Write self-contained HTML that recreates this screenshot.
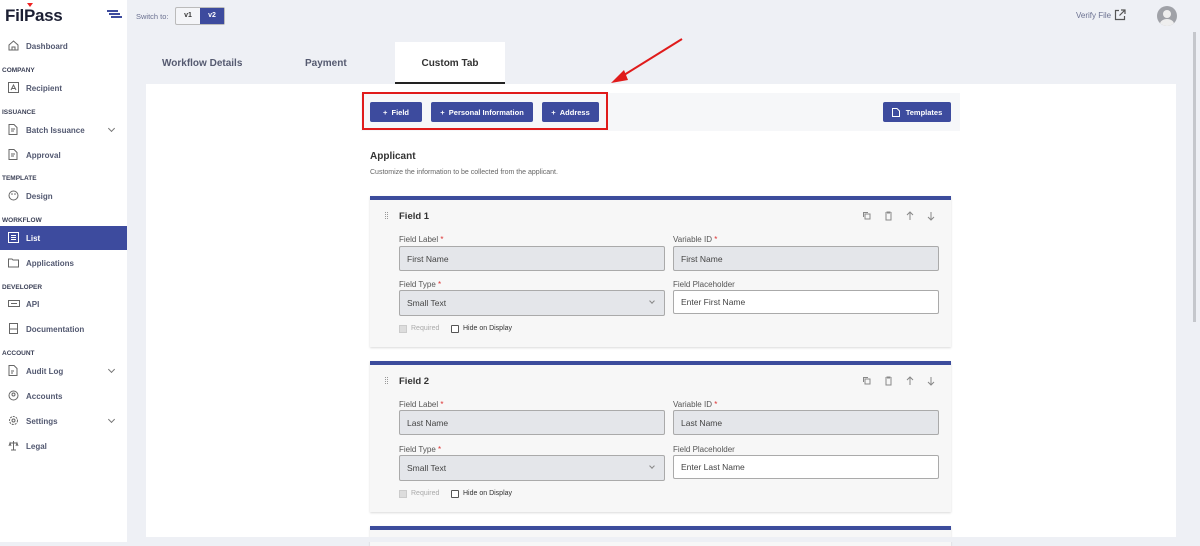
<!DOCTYPE html>
<html><head><meta charset="utf-8"><style>
*{box-sizing:border-box;margin:0;padding:0}
body{width:1200px;height:542px;overflow:hidden;background:#eef0f5;font-family:"Liberation Sans",sans-serif;position:relative;color:#333}
.abs{position:absolute;white-space:nowrap}
#side{left:0;top:0;width:127px;height:542px;background:#fff}
.logo{left:5px;top:6px;font-size:17px;font-weight:bold;color:#1c1f33;letter-spacing:-0.3px}
.sec{left:2px;font-size:6.5px;font-weight:bold;color:#3a3f55}
.item{left:0;width:127px;height:24px;font-size:8px;font-weight:bold;color:#525870;display:flex;align-items:center;padding-left:26px}
.item svg{position:absolute;left:8px;top:6px}
.item.act{background:#3d4b9e;color:#fff}
.chev{position:absolute;right:13px;top:8px;width:5px;height:5px;border-right:1px solid #777;border-bottom:1px solid #777;transform:rotate(45deg)}
.btn{background:#3d4b9e;color:#fff;font-size:7.5px;font-weight:bold;border-radius:2px;height:20px;top:102px;display:flex;align-items:center;justify-content:center}
.card{left:370px;width:581px;background:#f7f7f7;border-top:4px solid #3c4c9c;box-shadow:0 1px 2px rgba(0,0,0,.15)}
.lbl{font-size:8px;color:#555}
.lbl b{color:#d33;font-weight:normal}
.inp{width:266px;height:25px;border:1px solid #aaa;border-radius:2px;background:#e4e6ea;font-size:8.5px;color:#444;padding-left:7px;display:flex;align-items:center}
.inp.w{background:#fff}
.ft{font-size:9.5px;font-weight:bold;color:#333}
</style></head><body>
<div id="side" class="abs">
<div class="abs logo">Fil<span style="position:relative">P<span style="position:absolute;left:3px;top:-3px;border:3px solid transparent;border-top:4px solid #e22"></span></span>ass</div>
<div class="abs" style="left:107px;top:10px;width:11px;height:1.5px;background:#3d4b9e;box-shadow:2px 3px 0 #3d4b9e,4px 6px 0 #3d4b9e"></div>
<div class="abs item" style="top:34px"><svg width="11" height="11"><path d="M1 5L5.5 1 10 5V10H1Z M4 10V7H7V10" fill="none" stroke="#666"/></svg>Dashboard</div>
<div class="abs sec" style="top:67px">COMPANY</div>
<div class="abs item" style="top:76px"><svg width="11" height="11"><rect x=".5" y=".5" width="10" height="10" fill="none" stroke="#666"/><path d="M3 8L5.5 3 8 8M4 6.5H7" fill="none" stroke="#666"/></svg>Recipient</div>
<div class="abs sec" style="top:109px">ISSUANCE</div>
<div class="abs item" style="top:118px"><svg width="11" height="11"><path d="M1 .5H6L9 3.5V10.5H1Z M3 5H7M3 7H6" fill="none" stroke="#666"/></svg>Batch Issuance<span class="chev"></span></div>
<div class="abs item" style="top:143px"><svg width="11" height="11"><path d="M1 .5H6L9 3.5V10.5H1Z M3 5H7M3 7H6" fill="none" stroke="#666"/></svg>Approval</div>
<div class="abs sec" style="top:175px">TEMPLATE</div>
<div class="abs item" style="top:184px"><svg width="11" height="11"><circle cx="5.5" cy="5.5" r="4.5" fill="none" stroke="#666"/><circle cx="4" cy="4" r=".8" fill="#666"/><circle cx="7" cy="4" r=".8" fill="#666"/></svg>Design</div>
<div class="abs sec" style="top:217px">WORKFLOW</div>
<div class="abs item act" style="top:226px"><svg width="11" height="11"><rect x=".5" y=".5" width="10" height="10" fill="none" stroke="#fff"/><path d="M3 3.5H8M3 5.5H8M3 7.5H8" stroke="#fff"/></svg>List</div>
<div class="abs item" style="top:251px"><svg width="11" height="11"><path d="M.5 2H4L5 3H10.5V10H.5Z" fill="none" stroke="#666"/></svg>Applications</div>
<div class="abs sec" style="top:284px">DEVELOPER</div>
<div class="abs item" style="top:292px"><svg width="12" height="11"><rect x=".5" y="2.5" width="11" height="6" fill="none" stroke="#666"/><path d="M3 5.5H9" stroke="#666"/></svg>API</div>
<div class="abs item" style="top:317px"><svg width="11" height="11"><rect x="1.5" y=".5" width="8" height="10" fill="none" stroke="#666"/><path d="M1.5 6H9.5" stroke="#666"/></svg>Documentation</div>
<div class="abs sec" style="top:350px">ACCOUNT</div>
<div class="abs item" style="top:359px"><svg width="11" height="11"><path d="M1 .5H6L9 3.5V10.5H1Z M3 6H6M3 8H5" fill="none" stroke="#666"/></svg>Audit Log<span class="chev"></span></div>
<div class="abs item" style="top:384px"><svg width="11" height="11"><circle cx="5.5" cy="5.5" r="4.5" fill="none" stroke="#666"/><circle cx="5.5" cy="4.5" r="1.5" fill="none" stroke="#666"/></svg>Accounts</div>
<div class="abs item" style="top:409px"><svg width="11" height="11"><circle cx="5.5" cy="5.5" r="4" fill="none" stroke="#666" stroke-dasharray="2 1"/><circle cx="5.5" cy="5.5" r="1.5" fill="none" stroke="#666"/></svg>Settings<span class="chev"></span></div>
<div class="abs item" style="top:434px"><svg width="11" height="11"><path d="M5.5 1V10M2 3H9M1 6L2 3 3 6M8 6L9 3 10 6M3 10H8" fill="none" stroke="#666"/></svg>Legal</div>
</div>
<div class="abs" style="left:136px;top:12px;font-size:7.5px;color:#6a7090">Switch to:</div>
<div class="abs" style="left:175px;top:7px;width:50px;height:18px;border:1px solid #bbb;border-radius:2px;background:#f4f5f8;font-size:7px;font-weight:bold;display:flex"><span style="width:24px;text-align:center;line-height:16px">v1</span><span style="flex:1;background:#3d4b9e;color:#fff;text-align:center;line-height:16px">v2</span></div>
<div class="abs" style="left:1076px;top:11px;font-size:8px;color:#6a7090">Verify File</div>
<svg class="abs" style="left:1114px;top:9px" width="12" height="12"><path d="M5 1.5H1.5V10.5H10.5V7M7 1H11V5M11 1L5.5 6.5" fill="none" stroke="#555" stroke-width="1.2"/></svg>
<div class="abs" style="left:1157px;top:6px;width:20px;height:20px;border-radius:50%;background:#a0a2a8;overflow:hidden"><div class="abs" style="left:6px;top:4px;width:8px;height:8px;border-radius:50%;background:#eee"></div><div class="abs" style="left:3px;top:13px;width:14px;height:10px;border-radius:50%;background:#eee"></div></div>
<div class="abs" style="left:1193px;top:32px;width:3px;height:290px;background:#c5c7cc"></div>
<div class="abs" style="left:162px;top:58px;font-size:10px;font-weight:bold;color:#555a70">Workflow Details</div>
<div class="abs" style="left:305px;top:58px;font-size:10px;font-weight:bold;color:#555a70">Payment</div>
<div class="abs" style="left:395px;top:42px;width:110px;height:42px;background:#fff;border-bottom:2px solid #222"><div style="text-align:center;margin-top:16px;font-size:10px;font-weight:bold;color:#333">Custom Tab</div></div>
<div class="abs" style="left:146px;top:84px;width:1030px;height:453px;background:#fff"></div>
<div class="abs" style="left:361px;top:93px;width:599px;height:38px;background:#f6f7f9"></div>
<div class="abs btn" style="left:370px;width:52px">+ &nbsp;Field</div>
<div class="abs btn" style="left:431px;width:102px">+ &nbsp;Personal Information</div>
<div class="abs btn" style="left:542px;width:57px">+ &nbsp;Address</div>
<div class="abs btn" style="left:883px;width:68px"><svg width="8" height="9" style="margin-right:6px"><path d="M.5 .5H5L7.5 3V8.5H.5Z" fill="none" stroke="#fff"/></svg>Templates</div>
<div class="abs" style="left:362px;top:92px;width:246px;height:38px;border:2px solid #e01b1b"></div>
<svg class="abs" style="left:600px;top:35px" width="90" height="55"><path d="M82 4L16 45" stroke="#e01b1b" stroke-width="2"/><path d="M11 48L24 35 28 45Z" fill="#e01b1b"/></svg>
<div class="abs" style="left:370px;top:151px;font-size:10px;font-weight:bold;color:#333">Applicant</div>
<div class="abs" style="left:370px;top:169px;font-size:7px;color:#666">Customize the information to be collected from the applicant.</div>

<div class="abs card" style="top:196px;height:151px"></div>
<div class="abs card" style="top:361px;height:151px"></div>
<div class="abs card" style="top:526px;height:20px"></div>

<!-- card 1 -->
<div class="abs" style="left:385px;top:212px;width:3px;height:7px;border-left:1px dotted #999;border-right:1px dotted #999"></div>
<div class="abs ft" style="left:399px;top:211px">Field 1</div>
<svg class="abs" style="left:862px;top:211px" width="75" height="10"><g fill="none" stroke="#888"><rect x="3" y="3" width="5" height="5"/><path d="M1.5 6V1.5H6"/><path d="M23 2H30M25 2V1H28V2M24 3V9H29V3"/><path d="M48 9V1M45 4L48 1 51 4"/><path d="M69 1V9M66 6L69 9 72 6"/></g></svg>
<div class="abs lbl" style="left:399px;top:235px">Field Label <b>*</b></div>
<div class="abs lbl" style="left:673px;top:235px">Variable ID <b>*</b></div>
<div class="abs inp" style="left:399px;top:246px">First Name</div>
<div class="abs inp" style="left:673px;top:246px">First Name</div>
<div class="abs lbl" style="left:399px;top:280px">Field Type <b>*</b></div>
<div class="abs lbl" style="left:673px;top:280px">Field Placeholder</div>
<div class="abs inp" style="left:399px;top:290px;height:26px">Small Text<span style="position:absolute;right:10px;top:8px;width:4px;height:4px;border-right:1px solid #888;border-bottom:1px solid #888;transform:rotate(45deg)"></span></div>
<div class="abs inp w" style="left:673px;top:290px;height:24px">Enter First Name</div>
<div class="abs" style="left:399px;top:325px;width:8px;height:8px;background:#ddd;border:1px solid #ccc"></div>
<div class="abs" style="left:411px;top:325px;font-size:7px;color:#aaa">Required</div>
<div class="abs" style="left:451px;top:325px;width:8px;height:8px;border:1px solid #555;border-radius:1px;background:#fff"></div>
<div class="abs" style="left:463px;top:325px;font-size:7px;color:#333">Hide on Display</div>
<!-- card 2 -->
<div class="abs" style="left:385px;top:377px;width:3px;height:7px;border-left:1px dotted #999;border-right:1px dotted #999"></div>
<div class="abs ft" style="left:399px;top:376px">Field 2</div>
<svg class="abs" style="left:862px;top:376px" width="75" height="10"><g fill="none" stroke="#888"><rect x="3" y="3" width="5" height="5"/><path d="M1.5 6V1.5H6"/><path d="M23 2H30M25 2V1H28V2M24 3V9H29V3"/><path d="M48 9V1M45 4L48 1 51 4"/><path d="M69 1V9M66 6L69 9 72 6"/></g></svg>
<div class="abs lbl" style="left:399px;top:400px">Field Label <b>*</b></div>
<div class="abs lbl" style="left:673px;top:400px">Variable ID <b>*</b></div>
<div class="abs inp" style="left:399px;top:410px">Last Name</div>
<div class="abs inp" style="left:673px;top:410px">Last Name</div>
<div class="abs lbl" style="left:399px;top:445px">Field Type <b>*</b></div>
<div class="abs lbl" style="left:673px;top:445px">Field Placeholder</div>
<div class="abs inp" style="left:399px;top:455px;height:26px">Small Text<span style="position:absolute;right:10px;top:8px;width:4px;height:4px;border-right:1px solid #888;border-bottom:1px solid #888;transform:rotate(45deg)"></span></div>
<div class="abs inp w" style="left:673px;top:455px;height:24px">Enter Last Name</div>
<div class="abs" style="left:399px;top:490px;width:8px;height:8px;background:#ddd;border:1px solid #ccc"></div>
<div class="abs" style="left:411px;top:490px;font-size:7px;color:#aaa">Required</div>
<div class="abs" style="left:451px;top:490px;width:8px;height:8px;border:1px solid #555;border-radius:1px;background:#fff"></div>
<div class="abs" style="left:463px;top:490px;font-size:7px;color:#333">Hide on Display</div>
<div class="abs" style="left:127px;top:537px;width:1073px;height:5px;background:#eef0f5"></div>
</body></html>
